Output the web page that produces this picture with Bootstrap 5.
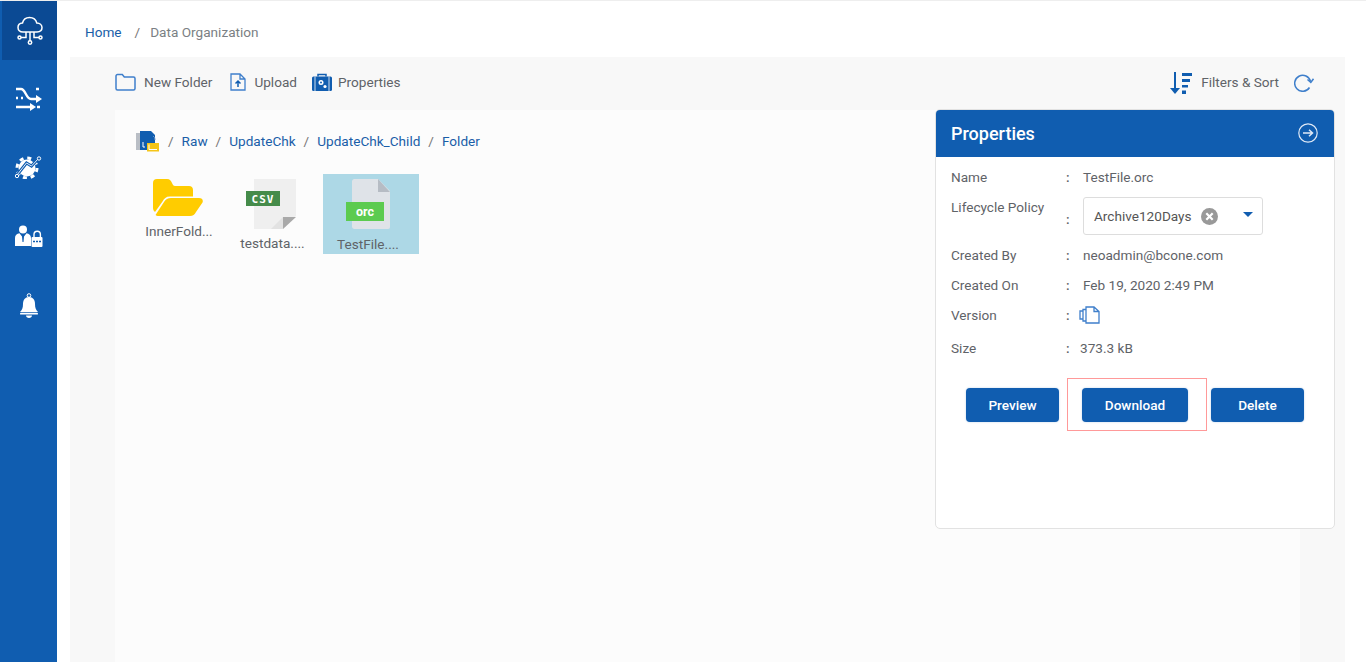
<!DOCTYPE html>
<html lang="en">
<head>
  <meta charset="UTF-8" />
  <meta name="viewport" content="width=device-width, initial-scale=1.0"/>
  <title>Data Organization</title>
  <link href="https://cdn.jsdelivr.net/npm/bootstrap@5.3.0/dist/css/bootstrap.min.css" rel="stylesheet">
  <style>
    html, body { height: 662px; overflow: hidden; }
    body { font-family: Roboto, "Liberation Sans", sans-serif; font-size: 13.6px; color: #5f6368; background: #fff; }
    a { color: #1a5ea8; text-decoration: none; }
    svg { display: block; flex: none; }
    .app-shell { height: 662px; border-top: 1px solid #eee; }
    .side-bar { width: 57px; background: #105db0; flex: none; }
    .side-item { height: 69px; }
    .side-item.first { height: 59px; margin-left: 2px; background: #0b4a94; margin-bottom: 4px; }
    .main-area { min-width: 0; }
    .crumb-top { height: 56px; padding: 6px 0 0 28px; }
    .crumb-top .sep { margin: 0 10px 0 13px; color: #777; }
    .crumb-top .cur { color: #7b7f84; }
    .work-panel { margin: 0 21px 0 13px; background: #f8f8f8; position: relative; min-height: 0; }
    .tool-bar { height: 53px; padding: 0 31px 2px 45px; }
    .tool-item { color: #5f6368; }
    .tool-gap { margin-right: 18px; }
    .tool-gap-b { margin-right: 15px; }
    .case-ic { margin-right: 6px; }
    .sort-ic { margin-right: 9px; }
    .refresh-ic { margin-left: 15px; }
    .file-pane { margin: 0 45px; background: #fcfcfc; }
    .path-row { height: 62px; padding-left: 21px; }
    .path-row .sep { color: #777; margin: 0 8px; }
    .file-grid { padding: 2px 0 0 16px; }
    .file-tile { width: 96px; height: 80px; padding-top: 5px; text-align: center; line-height: 17px; }
    .file-tile.sel { background: #add8e6; }
    .file-tile.shift-csv { padding-right: 5px; }
    .file-tile.shift-orc { padding-right: 6px; }
    .file-tile svg { margin: 0 auto; }
    .file-tile .folder-ic { margin-left: 22px; }
    .file-tile .csv-ic { margin-left: 19px; }
    .fname-a { margin-top: 7px; }
    .fname-b { margin-top: 6px; }
    .fname-c { margin-top: 7px; }
    .prop-panel { position: absolute; top: 52px; right: 10px; width: 400px; height: 420px; background: #fff; border: 1px solid #e2e2e2; border-radius: 5px; overflow: hidden; }
    .prop-head { height: 48px; background: #105db0; color: #fff; font-size: 18px; font-weight: 500; padding: 0 17px 0 16px; margin: -1px -1px 0; }
    .prop-body { padding: 5px 15px 0; }
    .prop-row { display: grid; grid-template-columns: 115px 17px 1fr; height: 30px; align-items: center; }
    .prop-row .cn { font-weight: 500; }
    .policy-row { height: 48px; align-items: start; }
    .policy-row > span:first-child { padding-top: 5px; }
    .policy-row > .cn { padding-top: 17px; }
    .policy-box { width: 180px; height: 38px; margin-top: 5px; border: 1px solid #ddd; border-radius: 3px; padding: 0 9px 0 10px; color: #555; }
    .clear-dot { margin-left: 9px; }
    .caret-down { width: 0; height: 0; border-left: 5.500px solid transparent; border-right: 5.500px solid transparent; border-top: 5.500px solid #105db0; margin-left: auto; margin-top: -3px; }
    .ver-icon { margin-left: -4px; }
    .size-row { height: 36px; }
    .size-row > span:last-child { margin-left: -3px; }
    .btn-line { margin-top: 22px; padding-left: 15px; gap: 23px; }
    .btn-blue { background: #105db0; color: #fff; border: 0; height: 34px; font-size: 13.6px; font-weight: 500; padding: 0; border-radius: 4px; box-shadow: 0 0 2px rgba(16,93,176,.3); }
    .btn-blue:hover { background: #0b4a94; color: #fff; }
    .prev-btn, .del-btn { width: 93px; }
    .down-btn { width: 106px; }
    .mark-box { position: absolute; left: 131px; top: 268px; width: 140px; height: 53px; border: 1px solid #f99; pointer-events: none; }
  </style>
</head>
<body>
  <div class="app-shell d-flex">
    <!-- left nav -->
    <div class="side-bar d-flex flex-column">
      <div class="side-item first d-flex align-items-center justify-content-center">
        <svg width="28" height="29" viewBox="0 0 28 29" fill="none" stroke="#fff" stroke-width="1.500">
          <path d="M7 16c-3.300 0-5-2-5-4.500S4 7.200 6.500 7C7.300 3.500 10 1.500 13.500 1.500c3.700 0 6.500 2.300 7.300 5.500 2.900.2 5.200 2.100 5.200 4.600 0 2.600-2 4.400-5 4.400z"/>
          <path d="M14 16v9M10 16v5.500H5M18 16v5.500h5"/>
          <circle cx="3.500" cy="21.500" r="1.500"/><circle cx="24.500" cy="21.500" r="1.500"/><circle cx="14" cy="26.500" r="1.700"/>
        </svg>
      </div>
      <div class="side-item d-flex align-items-center justify-content-center">
        <svg width="26" height="24" viewBox="0 0 26 24" fill="none" stroke="#fff" stroke-width="2.400">
          <path d="M0 2h5c4.500 0 5 10 10 10h6M0 20h14"/>
          <path d="M20 8l6 4-6 4zM14 16l6 4-6 4z" fill="#fff" stroke="none"/>
          <path d="M20 2h3M0 11h2M5 11h2M21 20h3"/>
        </svg>
      </div>
      <div class="side-item d-flex align-items-center justify-content-center">
        <svg width="27" height="23" viewBox="0 0 27 23">
          <circle cx="12" cy="12" r="8.500" fill="#fff"/>
          <circle cx="12" cy="12" r="10" fill="none" stroke="#fff" stroke-width="3" stroke-dasharray="4 3.850"/>
          <path d="M2 19l9.500-12 5 3L23 3" fill="none" stroke="#105db0" stroke-width="3"/>
          <path d="M2 19l9.500-12 5 3L23 3" fill="none" stroke="#e6eefa" stroke-width="1"/>
          <circle cx="24" cy="2.500" r="1.700" fill="#105db0" stroke="#fff"/><circle cx="2" cy="20" r="1.700" fill="#105db0" stroke="#fff"/>
        </svg>
      </div>
      <div class="side-item d-flex align-items-center justify-content-center">
        <svg width="28" height="23" viewBox="0 0 28 23">
          <circle cx="8" cy="4.500" r="4" fill="#fff"/>
          <path d="M0 21V13c0-3 1.800-4.200 4.500-4.800L7 11.500 7.500 17 8.500 17 9 11.500l2.500-3.300C14 8.800 16 10 16 13V21z" fill="#fff"/>
          <path d="M19 12V9.500a3.200 3.200 0 0 1 6.400 0V12" fill="none" stroke="#fff" stroke-width="1.400"/>
          <rect x="16.500" y="12" width="11" height="10" rx="1" fill="#fff"/>
          <path d="M18 16.500h8" stroke="#105db0" stroke-width="1.600" stroke-dasharray="2 1"/>
        </svg>
      </div>
      <div class="side-item d-flex align-items-center justify-content-center">
        <svg width="20" height="26" viewBox="0 0 20 26">
          <circle cx="10" cy="2.500" r="1.800" fill="none" stroke="#fff"/>
          <path d="M10 4c4 0 6 3 6 7 0 4 1 6 3 8H1c2-2 3-4 3-8 0-4 2-7 6-7z" fill="#fff"/>
          <rect x="1" y="19.800" width="18" height="1.800" rx=".9" fill="#fff"/>
          <path d="M7 22.500h6c0 1.500-1.300 2.500-3 2.500s-3-1-3-2.500z" fill="#fff"/>
        </svg>
      </div>
    </div>

    <div class="main-area flex-grow-1 d-flex flex-column">
      <div class="crumb-top d-flex align-items-center">
        <a href="#">Home</a><span class="sep">/</span><span class="cur">Data Organization</span>
      </div>

      <div class="work-panel flex-grow-1 d-flex flex-column">
        <!-- toolbar -->
        <div class="tool-bar d-flex align-items-center">
          <div class="tool-item tool-gap d-flex align-items-center">
            <svg class="me-2" width="21" height="18" viewBox="0 0 21 18" fill="none" stroke="#3f7fcb" stroke-width="1.500"><path d="M1 3a1.500 1.500 0 0 1 1.500-1.500h4.800l2 2.500h9.200A1.500 1.500 0 0 1 20 5.500v10a1.500 1.500 0 0 1-1.500 1.500h-16A1.500 1.500 0 0 1 1 15.500z"/></svg>
            New Folder
          </div>
          <div class="tool-item tool-gap-b d-flex align-items-center">
            <svg class="me-2" width="16" height="18" viewBox="0 0 16 18" fill="none" stroke="#3f7fcb" stroke-width="1.300"><path d="M1 1h9l5 5v11H1zM10 1v5h5"/><path d="M8 14V8.500M5.500 10.500L8 8l2.500 2.500" stroke="#105db0" stroke-width="1.500"/></svg>
            Upload
          </div>
          <div class="tool-item d-flex align-items-center">
            <svg class="case-ic" width="20" height="18" viewBox="0 0 20 18"><path d="M6 3.500V1.500h8v2" fill="none" stroke="#105db0" stroke-width="1.500"/><rect y="3.500" width="20" height="14.500" rx="1.500" fill="#105db0"/><path d="M3 3.500V18M17 3.500V18" stroke="#fff" stroke-width=".8"/><circle cx="9" cy="9.500" r="2.500" fill="#fff"/><circle cx="9" cy="9.500" r="1" fill="#105db0"/><circle cx="13" cy="13.500" r="1.600" fill="#fff"/></svg>
            Properties
          </div>
          <div class="tool-item d-flex align-items-center ms-auto">
            <svg class="sort-ic" width="22" height="24" viewBox="0 0 22 24"><path d="M5 1v18" stroke="#105db0" stroke-width="2"/><path d="M0 17h10l-5 6z" fill="#105db0"/><path d="M12 2h10v3H12zM12 8h8v3h-8zM12 14h6v2.500h-6zM12 19.500h4V23h-4z" fill="#105db0"/></svg>
            Filters &amp; Sort
            <svg class="refresh-ic" width="20" height="18" viewBox="0 0 20 18" fill="none" stroke="#3f7fcb" stroke-width="1.500"><path d="M15.500 13.500A8 8 0 1 1 16.500 7.500"/><path d="M13.500 5.500l3.300 3 2.700-3.700"/></svg>
          </div>
        </div>

        <!-- files -->
        <div class="file-pane flex-grow-1">
          <div class="path-row d-flex align-items-center">
            <svg width="24" height="22" viewBox="0 0 24 22"><path d="M0 3h5v17H0z" fill="#b9bec5"/><path d="M4 1h11l4 4v15H4z" fill="#105db0"/><path d="M17 6a4 4 0 0 1 2 4" stroke="#6d94c4" fill="none"/><rect x="11" y="13" width="12" height="8.500" fill="#f5c518"/><path d="M13 14.500v5h8" stroke="#fff" fill="none"/><path d="M7 12v5h2" stroke="#fff" fill="none"/></svg>
            <span class="sep">/</span><a href="#">Raw</a>
            <span class="sep">/</span><a href="#">UpdateChk</a>
            <span class="sep">/</span><a href="#">UpdateChk_Child</a>
            <span class="sep">/</span><a href="#">Folder</a>
          </div>
          <div class="file-grid d-flex">
            <div class="file-tile">
              <svg class="folder-ic" width="50" height="37" viewBox="0 0 50 37"><path d="M0 4a4 4 0 0 1 4-4h10c3 0 4 2 5 4 .8 1.800 1.500 3 3 3h14c2.500 0 4 1.500 4 4v6.500H17c-4 0-6 2-7.500 5L2 33c-1-.7-2-2-2-4z" fill="#ffcc00"/><path d="M18 19h28c3 0 4.500 2 3.500 4.500L43 33c-1.300 2.500-3 4-6 4H6c-2 0-3-.5-3.500-1L11 23c1.500-2.700 4-4 7-4z" fill="#ffcc00"/></svg>
              <div class="fname-a">InnerFold...</div>
            </div>
            <div class="file-tile shift-csv">
              <svg class="csv-ic" width="50" height="50" viewBox="0 0 50 50"><path d="M8 0h42v37L37 50H8z" fill="#efefef"/><path d="M37 38h13L37 50z" fill="#a9a9a9"/><path d="M25 50l12-12v12z" fill="#e2e2e2"/><rect y="12" width="34" height="15" fill="#458b4a"/><text x="17" y="23.500" text-anchor="middle" fill="#fff" font-family="'DejaVu Sans Mono',monospace" font-weight="700" font-size="11" letter-spacing="1">CSV</text></svg>
              <div class="fname-b">testdata....</div>
            </div>
            <div class="file-tile sel shift-orc">
              <svg width="44" height="50" viewBox="0 0 44 50"><path d="M8 0h24l12 12v36a2 2 0 0 1-2 2H8a3 3 0 0 1-2-2V2a3 3 0 0 1 2-2z" fill="#dfe3e8"/><path d="M32 0l12 13H32z" fill="#b6bcc4"/><rect y="23" width="38" height="19" fill="#5ccb50"/><text x="19" y="36.500" text-anchor="middle" fill="#fff" font-family="Roboto,sans-serif" font-weight="700" font-size="12.500">orc</text></svg>
              <div class="fname-c">TestFile....</div>
            </div>
          </div>
        </div>

        <!-- properties -->
        <div class="prop-panel">
          <div class="prop-head d-flex align-items-center justify-content-between">
            <span>Properties</span>
            <svg width="20" height="20" viewBox="0 0 20 20" fill="none" stroke="#dfe9f6" stroke-width="1.200"><circle cx="10" cy="10" r="9.200"/><path d="M5 10h9.500M11 6.800L14.500 10 11 13.200" stroke-width="1.500"/></svg>
          </div>
          <div class="prop-body">
            <div class="prop-row"><span>Name</span><span class="cn">:</span><span>TestFile.orc</span></div>
            <div class="prop-row policy-row"><span>Lifecycle Policy</span><span class="cn">:</span>
              <div class="policy-box d-flex align-items-center">
                Archive120Days
                <svg class="clear-dot" width="17" height="17" viewBox="0 0 17 17"><circle cx="8.500" cy="8.500" r="8.500" fill="#999"/><path d="M5.300 5.300l6.400 6.400M11.700 5.300l-6.400 6.400" stroke="#fff" stroke-width="2.200"/></svg>
                <span class="caret-down"></span>
              </div>
            </div>
            <div class="prop-row"><span>Created By</span><span class="cn">:</span><span>neoadmin@bcone.com</span></div>
            <div class="prop-row"><span>Created On</span><span class="cn">:</span><span>Feb 19, 2020 2:49 PM</span></div>
            <div class="prop-row"><span>Version</span><span class="cn">:</span>
              <svg class="ver-icon" width="21" height="18" viewBox="0 0 21 18" fill="none" stroke="#3f7fcb" stroke-width="1.300"><path d="M7 1h8l5 4.500V17H7zM15 1v4.500h5"/><path d="M7 3.500H4V15h3M4 5H1v8h3"/></svg>
            </div>
            <div class="prop-row size-row"><span>Size</span><span class="cn">:</span><span>373.3 kB</span></div>
            <div class="btn-line d-flex">
              <button type="button" class="btn btn-blue prev-btn">Preview</button>
              <button type="button" class="btn btn-blue down-btn">Download</button>
              <button type="button" class="btn btn-blue del-btn">Delete</button>
            </div>
          </div>
          <div class="mark-box"></div>
        </div>
      </div>
    </div>
  </div>
  <script src="https://cdn.jsdelivr.net/npm/bootstrap@5.3.0/dist/js/bootstrap.bundle.min.js"></script>
</body>
</html>
